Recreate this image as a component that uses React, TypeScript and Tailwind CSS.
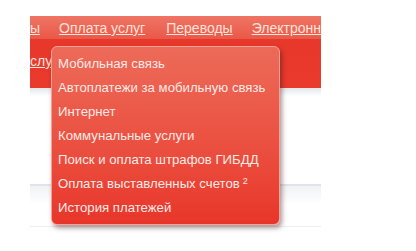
import React from 'react';

const items = [
  'Мобильная связь',
  'Автоплатежи за мобильную связь',
  'Интернет',
  'Коммунальные услуги',
  'Поиск и оплата штрафов ГИБДД',
  'Оплата выставленных счетов',
  'История платежей',
];

const App: React.FC = () => {
  return (
    <div className="relative w-[416px] h-[251px] bg-white overflow-hidden font-['Liberation_Sans',Arial,sans-serif]">
      {/* Page strip */}
      <div className="ml-[30px] w-[291px] pt-[16px]">
        <div className="h-[23px] bg-gradient-to-b from-[#ef7464] to-[#ea5848] overflow-hidden">
          <div className="flex whitespace-nowrap text-[14px] leading-[23px] text-[#fde4dc] pt-[1px]">
            <span className="underline">ы</span>
            <span className="underline ml-[19px]">Оплата услуг</span>
            <span className="underline ml-[21px]">Переводы</span>
            <span className="underline ml-[19px]">Электронн</span>
          </div>
        </div>
        <div className="h-[49px] bg-gradient-to-b from-[#e8382b] to-[#ea3a2d] overflow-hidden">
          <div className="whitespace-nowrap text-[14px] leading-[18px] text-[#fde4dc] pt-[13px]">
            <span className="underline">слуги</span>
          </div>
        </div>
        <div className="h-[8px] bg-gradient-to-b from-[#e4e6ea] to-white" />
        <div className="h-[88px]" />
        <div className="h-[2px] bg-[#dfe4ea]" />
        <div className="h-[18px] bg-gradient-to-b from-[#f1f2f4] to-white" />
        <div className="h-[22px]" />
        <div className="h-[1px] bg-[#eeeeee]" />
      </div>

      {/* Dropdown */}
      <div className="absolute left-[51px] top-[46px] w-[229px] h-[179px] rounded-[6px] border border-[#f5a197] bg-gradient-to-b from-[#ed6a58] to-[#e8352a] shadow-[2px_3px_5px_rgba(60,20,20,0.45)] pt-[5px]">
        {items.map((item, i) => (
          <div key={i} className="h-[24px] pl-[6px] text-[13.2px] leading-[24px] text-[#fdeae6] whitespace-nowrap">
            {item}
            {i === 5 && <sup className="ml-[3px] text-[9px]">2</sup>}
          </div>
        ))}
      </div>
    </div>
  );
};

export default App;
